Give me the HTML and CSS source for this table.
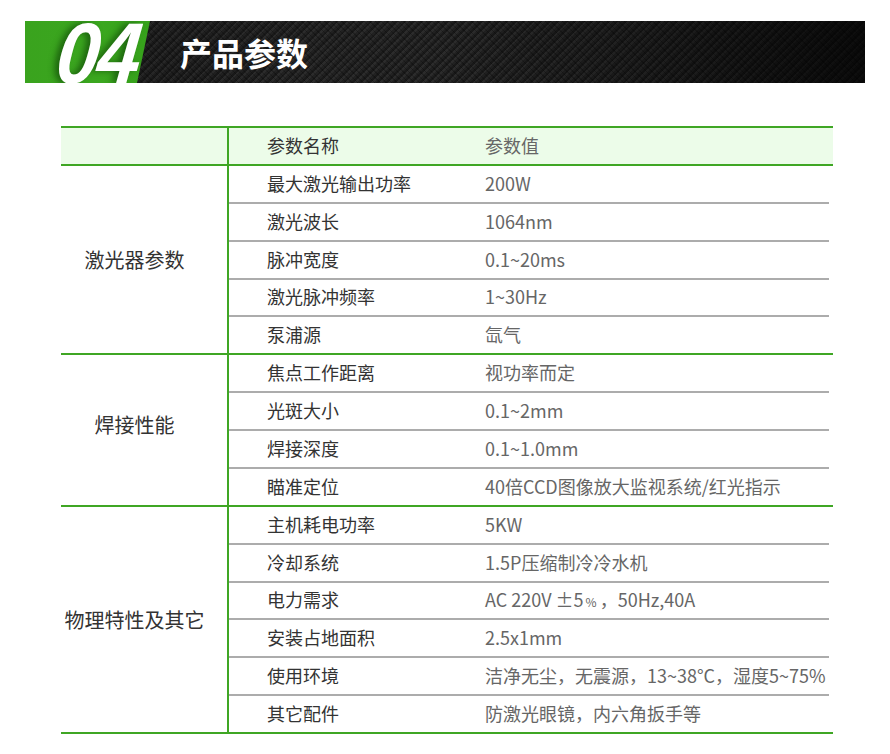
FILE: index.html
```html
<!DOCTYPE html>
<html lang="zh-CN">
<head>
<meta charset="utf-8">
<title>产品参数</title>
<link rel="stylesheet" href="styles.css">
</head>
<body>
<div class="page">
  <div class="banner">
    <div class="badge"><span class="num">04</span></div>
    <h2 class="title">产品参数</h2>
  </div>

  <div class="table">
    <div class="head">
      <div class="label"></div>
      <div class="rows">
        <div class="row"><div class="name">参数名称</div><div class="val">参数值</div></div>
      </div>
    </div>

    <div class="group">
      <div class="label">激光器参数</div>
      <div class="rows">
        <div class="row"><div class="name">最大激光输出功率</div><div class="val">200W</div></div>
        <div class="row"><div class="name">激光波长</div><div class="val">1064nm</div></div>
        <div class="row"><div class="name">脉冲宽度</div><div class="val">0.1~20ms</div></div>
        <div class="row"><div class="name">激光脉冲频率</div><div class="val">1~30Hz</div></div>
        <div class="row"><div class="name">泵浦源</div><div class="val">氙气</div></div>
      </div>
    </div>

    <div class="group">
      <div class="label label-raised">焊接性能</div>
      <div class="rows">
        <div class="row"><div class="name">焦点工作距离</div><div class="val">视功率而定</div></div>
        <div class="row"><div class="name">光斑大小</div><div class="val">0.1~2mm</div></div>
        <div class="row"><div class="name">焊接深度</div><div class="val">0.1~1.0mm</div></div>
        <div class="row"><div class="name">瞄准定位</div><div class="val">40倍CCD图像放大监视系统/红光指示</div></div>
      </div>
    </div>

    <div class="group">
      <div class="label">物理特性及其它</div>
      <div class="rows">
        <div class="row"><div class="name">主机耗电功率</div><div class="val">5KW</div></div>
        <div class="row"><div class="name">冷却系统</div><div class="val">1.5P压缩制冷冷水机</div></div>
        <div class="row"><div class="name">电力需求</div><div class="val">AC 220V ±5<span class="pct">%</span>，50Hz,40A</div></div>
        <div class="row"><div class="name">安装占地面积</div><div class="val">2.5x1mm</div></div>
        <div class="row"><div class="name">使用环境</div><div class="val">洁净无尘，无震源，13~38°C，湿度5~75%</div></div>
        <div class="row"><div class="name">其它配件</div><div class="val">防激光眼镜，内六角扳手等</div></div>
      </div>
    </div>
  </div>
</div>
</body>
</html>
```

FILE: styles.css
```css
html, body {
  margin: 0;
  padding: 0;
  background: #ffffff;
}

body {
  font-family: "Noto Sans CJK SC", "Noto Sans", sans-serif;
  color: #333333;
}

.page {
  width: 890px;
  padding-top: 21px;
}

/* ---------- banner ---------- */
.banner {
  margin: 0 25px;
  height: 62px;
  display: flex;
  align-items: center;
  overflow: hidden;
  background:
    linear-gradient(to right,
      rgba(0, 0, 0, 0.35) 0%,
      rgba(0, 0, 0, 0.15) 30%,
      rgba(0, 0, 0, 0.15) 50%,
      rgba(0, 0, 0, 0.4) 75%,
      rgba(0, 0, 0, 0.75) 100%),
    repeating-linear-gradient(45deg,
      rgba(0, 0, 0, 0.0) 0 3px,
      rgba(0, 0, 0, 0.25) 3px 4px),
    repeating-linear-gradient(135deg,
      #333333 0 2px,
      #272727 2px 4px,
      #1e1e1e 4px 6px),
    #1e1e1e;
}

.badge {
  position: relative;
  width: 125px;
  height: 62px;
  flex: none;
}

.badge::before {
  content: "";
  position: absolute;
  inset: 0;
  background: linear-gradient(to right, #3aa31e 0%, #3ba71f 60%, #36a11b 100%);
  clip-path: polygon(0 0, 100% 0, calc(100% - 13px) 100%, 0 100%);
}

.num {
  position: relative;
  display: block;
  padding-left: 32px;
  font-family: "Liberation Sans", Arial, sans-serif;
  font-weight: 700;
  font-style: italic;
  font-size: 86px;
  line-height: 62px;
  height: 62px;
  letter-spacing: -2px;
  color: #ffffff;
  transform: scaleX(0.9) skewX(-7deg);
  transform-origin: left bottom;
  text-shadow: -5px 0 7px rgba(20, 80, 10, 0.75);
  margin-top: 1px;
}

.title {
  margin: 0 0 0 30px;
  font-size: 32px;
  font-weight: 700;
  line-height: 1;
  color: #ffffff;
  letter-spacing: 0;
}

/* ---------- table ---------- */
.table {
  margin: 43px 0 0 61px;
  width: 772px;
  border-top: 2px solid #3fa624;
}

.head,
.group {
  display: flex;
  border-bottom: 2px solid #3fa624;
}

.head {
  background: #ecfce9;
}

.label {
  width: 147px;
  padding-right: 19px;
  flex: none;
  border-right: 2px solid #3fa624;
  display: flex;
  align-items: center;
  justify-content: center;
  font-size: 20px;
  color: #333333;
}

.label-raised {
  padding-bottom: 12px;
}

.rows {
  flex: 1;
  display: flex;
  flex-direction: column;
}

.row {
  box-sizing: border-box;
  height: 37.875px;
  margin-right: 4px;
  padding-bottom: 2px;
  display: flex;
  align-items: center;
  border-bottom: 2px solid #acacac;
  font-size: 18px;
}

.row:last-child {
  height: 35.875px;
  border-bottom: none;
}

.name {
  width: 180px;
  padding-left: 38px;
  flex: none;
  color: #333333;
}

.val {
  padding-left: 38px;
  color: #666666;
  white-space: nowrap;
}

.pct {
  font-size: 12px;
  padding: 0 3px 0 2px;
}
```
